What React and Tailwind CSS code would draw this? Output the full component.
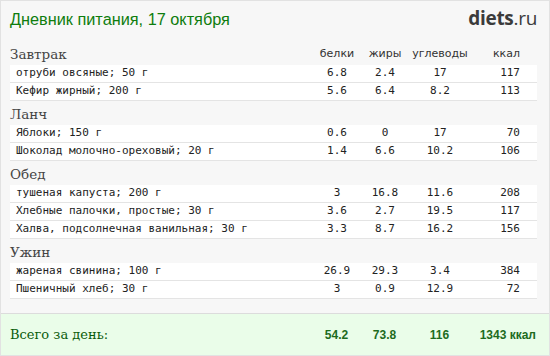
const meals = [
  {
    title: "Завтрак",
    items: [
      ["отруби овсяные; 50 г", "6.8", "2.4", "17", "117"],
      ["Кефир жирный; 200 г", "5.6", "6.4", "8.2", "113"],
    ],
  },
  {
    title: "Ланч",
    items: [
      ["Яблоки; 150 г", "0.6", "0", "17", "70"],
      ["Шоколад молочно-ореховый; 20 г", "1.4", "6.6", "10.2", "106"],
    ],
  },
  {
    title: "Обед",
    items: [
      ["тушеная капуста; 200 г", "3", "16.8", "11.6", "208"],
      ["Хлебные палочки, простые; 30 г", "3.6", "2.7", "19.5", "117"],
      ["Халва, подсолнечная ванильная; 30 г", "3.3", "8.7", "16.2", "156"],
    ],
  },
  {
    title: "Ужин",
    items: [
      ["жареная свинина; 100 г", "26.9", "29.3", "3.4", "384"],
      ["Пшеничный хлеб; 30 г", "3", "0.9", "12.9", "72"],
    ],
  },
];

const serif = "font-['DejaVu_Serif',serif]";
const mono = "font-['DejaVu_Sans_Mono',monospace]";

function Cols({ values, className }) {
  return (
    <>
      <div className={`w-[48px] text-center ${className}`}>{values[0]}</div>
      <div className={`w-[48px] text-center ${className}`}>{values[1]}</div>
      <div className={`w-[62px] text-center ${className}`}>{values[2]}</div>
      <div className={`w-[66px] text-right pr-[17px] ${className}`}>{values[3]}</div>
    </>
  );
}

function Meal({ meal, first }) {
  return (
    <div className="flex flex-col">
      <div className="h-[24px] flex items-center pt-[3px]">
        <div className={`flex-1 ${serif} text-[13.5px] text-[#444]`}>{meal.title}</div>
        {first && (
          <Cols
            values={["белки", "жиры", "углеводы", "ккал"]}
            className="font-['DejaVu_Sans',sans-serif] text-[11px] text-[#333]"
          />
        )}
      </div>
      {meal.items.map((row) => (
        <div
          key={row[0]}
          className={`h-[18px] bg-white border-b border-[#e4e4e4] flex items-center ${mono} text-[11px] text-[#222]`}
        >
          <div className="flex-1 pl-[6px] whitespace-nowrap">{row[0]}</div>
          <Cols values={row.slice(1)} />
        </div>
      ))}
    </div>
  );
}

export default function App() {
  return (
    <div className="w-[550px] h-[356px] bg-[#f7f7f7] border border-[#e2e2e2] flex flex-col overflow-hidden">
      {/* Шапка */}
      <div className="h-[40px] pl-[9px] pr-[12px] flex items-start justify-between pt-[6px]">
        <div className="font-['Liberation_Sans',sans-serif] text-[16.3px] text-[#0e7d0e]">
          Дневник питания, 17 октября
        </div>
        <div className="font-['Open_Sans',sans-serif] text-[19px] leading-[22px] text-[#3b3b3b] tracking-[-0.3px]">
          <span className="font-bold">diets</span>.ru
        </div>
      </div>

      {/* Приёмы пищи */}
      <div className="flex-1 pl-[9px] pr-[12px] flex flex-col">
        {meals.map((m, i) => (
          <Meal key={m.title} meal={m} first={i === 0} />
        ))}
      </div>

      {/* Итого */}
      <div className="h-[42px] border-t border-[#dcdcdc] bg-[#eafde9] pl-[9px] pr-[12px] flex items-center">
        <div className={`flex-1 ${serif} text-[13px] text-[#0b5c0b]`}>Всего за день:</div>
        <Cols
          values={["54.2", "73.8", "116", "1343 ккал"]}
          className="font-['Liberation_Sans',sans-serif] font-bold text-[12px] text-[#1d6b1d] !pr-[1px]"
        />
      </div>
    </div>
  );
}
